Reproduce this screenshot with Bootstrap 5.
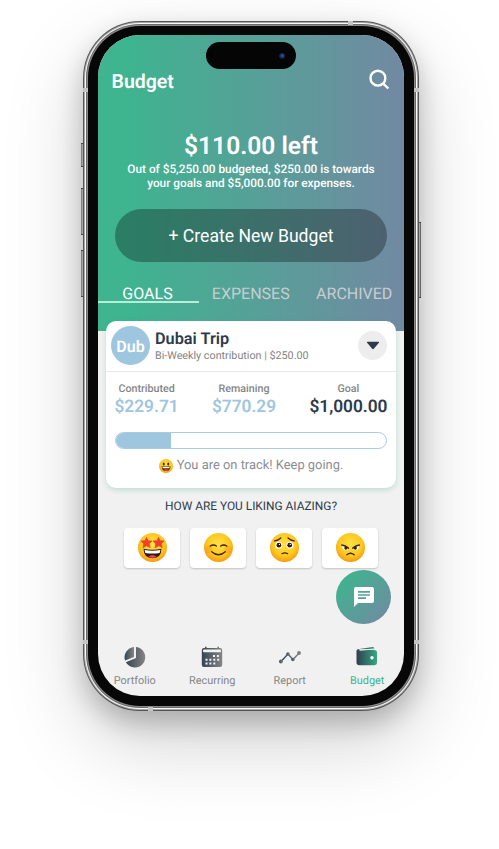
<!DOCTYPE html>
<html lang="en">
<head>
<meta charset="utf-8">
<meta name="viewport" content="width=device-width, initial-scale=1">
<title>Budget</title>
<link href="https://cdn.jsdelivr.net/npm/bootstrap@5.3.0/dist/css/bootstrap.min.css" rel="stylesheet">
<style>
body{font-family:Roboto,"Liberation Sans",sans-serif;background:#fff;width:499px;height:849px;overflow:hidden;color:#2d3a4a;text-rendering:geometricPrecision}
.stage{padding:21px 0 0 83px;height:849px}
.phone{width:336px;height:690px;border-radius:57px;padding:1px;background:#555;
 box-shadow:0 12px 26px rgba(0,0,0,.22),0 32px 80px rgba(0,0,0,.18)}
.rim-a{height:100%;border-radius:56px;padding:1px;background:#a8a8a8}
.rim-b{height:100%;border-radius:55px;padding:1px;background:#fafafa}
.rim-c{height:100%;border-radius:54px;padding:1px;background:#6b6b6b}
.rim-d{height:100%;border-radius:53px;padding:1px;background:#8d8989}
.bezel{height:100%;border-radius:52px;padding:8.500px 10px 10px;background:#070707}
.screen{width:306px;height:661px;border-radius:42px;background:#f1f1f1;overflow:hidden}
.side-key{position:absolute;width:3px;background:linear-gradient(90deg,#888,#ccc 50%,#555);border-top:1px solid #555;border-bottom:1px solid #555}
.antenna{position:absolute;background:#c3c3c3}
.island{position:absolute;left:108px;top:7px;width:90px;height:27px;border-radius:14px;background:#050505}
.lens{position:absolute;left:73px;top:11px;width:6px;height:6px;border-radius:50%;background:radial-gradient(circle at 55% 45%,#2b4f9a 0 15%,#12234e 50%,#0c0f18)}
.hero{height:296px;background:linear-gradient(90deg,#3eb48f 0%,#3eb48f 9%,#708ba1 96%);color:#fff}
.hero-head{padding:34px 14px 0 13.500px;height:60px}
.screen-title{font-size:19.500px;font-weight:600;line-height:26px}
.left-sum{font-size:24.600px;font-weight:600;line-height:32px;margin-top:36px}
.left-note{font-size:11.800px;font-weight:500;line-height:14px;margin-top:-1px}
.create{width:272px;height:53px;border-radius:27px;margin:19px 0 0 17px;background:rgba(0,0,0,.3);color:#fff;font-size:17.600px;padding:3px 0 0;border:0}
.tabs-row{margin-top:21px;height:20px}
.tab-i{width:103.500px;font-size:16px;line-height:22px;color:#c8cdd0;border-bottom:2px solid transparent;text-align:center;height:20.500px;flex:none;white-space:nowrap}
.tab-i.on{width:101px;color:#fff;border-color:#b6efd9;padding-right:2px}
.goal{margin:-10px 8px 0;height:167px;border-radius:10px;background:#fff;position:relative;box-shadow:0 2px 5px rgba(62,180,143,.3)}
.goal-top{height:51px;padding:0 9px 0 5px;border-bottom:1px solid #e9e9e9}
.ava{width:39px;height:39px;border-radius:50%;background:#9fc6df;color:#fff;font-weight:600;font-size:16px;line-height:41px;text-align:center}
.g-text{margin-left:5px}
.g-name{font-size:16.300px;font-weight:600;line-height:19px}
.g-sub{font-size:10.750px;color:#838383;line-height:14px;margin-top:1px}
.drop{width:29px;height:29px;border-radius:50%;background:#ededed}
.stat-l{font-size:10.700px;font-weight:500;color:#858585;line-height:14px}
.stat-v{font-size:17.300px;font-weight:600;line-height:22px;color:#9fc6df}
.text-ink{color:#2d3a4a}
.stats{padding:10px 8.500px 0 8.500px}
.meter{margin:14px 9px 0;height:17px;border-radius:9px;border:1px solid #a8cde2;overflow:hidden}
.meter-fill{height:100%;background:#9fc6df}
.track{font-size:12.900px;color:#8a8d93;line-height:18px;margin-top:8px}
.ask{font-size:11.900px;line-height:16px;margin-top:10px}
.moods{padding:14px 26px 0}
.mood{width:56px;height:40px;border-radius:4px;background:#fff;box-shadow:0 1px 2px rgba(0,0,0,.2)}
.chat-wrap{padding:2px 13px 0 0}
.chat{width:55px;height:54px;border-radius:50%;background:linear-gradient(135deg,#3eb48f 12%,#708ba1 92%);position:relative}
.nav-b{margin:21px 0 0 -2px}
.nav-i{width:77.500px;flex:none;font-size:10.900px;color:#858585;line-height:14px;text-align:center}
.nav-i.nav-on{color:#3eb48f}
.nav-i svg{display:block;margin:0 auto 5px}
svg{display:block;flex:none}
</style>
<script src="https://cdn.jsdelivr.net/npm/bootstrap@5.3.0/dist/js/bootstrap.bundle.min.js"></script>
</head>
<body>
<svg width="0" height="0" class="position-absolute">
<defs>
<radialGradient id="face" cx=".5" cy=".4" r=".6"><stop offset="0" stop-color="#ffe04a"/><stop offset=".65" stop-color="#fdc91f"/><stop offset="1" stop-color="#f49a14"/></radialGradient>
<linearGradient id="ink"><stop offset="0" stop-color="#354454"/><stop offset="1" stop-color="#858585"/></linearGradient>
<linearGradient id="wal"><stop offset="0" stop-color="#2f3e4e"/><stop offset="1" stop-color="#36a983"/></linearGradient>
</defs>
</svg>
<main class="stage position-relative">
<i class="side-key" style="left:81px;top:143px;height:24px"></i>
<i class="side-key" style="left:81px;top:188px;height:47px"></i>
<i class="side-key" style="left:81px;top:250px;height:47px"></i>
<i class="side-key" style="left:418px;top:222px;height:76px"></i>
<div class="phone position-relative"><div class="rim-a"><div class="rim-b"><div class="rim-c"><div class="rim-d"><div class="bezel">
<div class="screen position-relative">
  <div class="island"><i class="lens"></i></div>
  <section class="hero">
    <header class="hero-head d-flex justify-content-between">
      <h1 class="screen-title mb-0">Budget</h1>
      <svg width="22" height="22" viewBox="0 0 22 22" fill="none" stroke="#fff" stroke-width="2.4"><circle cx="9.900" cy="9.200" r="7.400"/><path d="M15.200 14.600 20.300 19.500"/></svg>
    </header>
    <div class="text-center">
      <div class="left-sum">$110.00 left</div>
      <p class="left-note mb-0">Out of $5,250.00 budgeted, $250.00 is towards<br>your goals and $5,000.00 for expenses.</p>
    </div>
    <button class="create btn d-block">+ Create New Budget</button>
    <nav class="tabs-row d-flex">
      <span class="tab-i on">GOALS</span><span class="tab-i">EXPENSES</span><span class="tab-i">ARCHIVED</span>
    </nav>
  </section>
  <section class="goal">
    <div class="goal-top d-flex align-items-center">
      <span class="ava">Dub</span>
      <div class="g-text flex-grow-1"><div class="g-name">Dubai Trip</div><div class="g-sub">Bi-Weekly contribution | $250.00</div></div>
      <span class="drop d-flex align-items-center justify-content-center"><svg width="14" height="9" viewBox="0 0 14 9"><path d="M1.5.8h11q1 .2.4 1L7.8 7.8q-.8.8-1.6 0L1.1 1.8q-.6-.8.4-1Z" fill="#2d3a4a"/></svg></span>
    </div>
    <div class="stats d-flex justify-content-between text-center">
      <div><div class="stat-l">Contributed</div><div class="stat-v">$229.71</div></div>
      <div><div class="stat-l">Remaining</div><div class="stat-v">$770.29</div></div>
      <div><div class="stat-l">Goal</div><div class="stat-v text-ink">$1,000.00</div></div>
    </div>
    <div class="meter"><div class="meter-fill" style="width:20.5%"></div></div>
    <div class="track d-flex align-items-center justify-content-center gap-1">
      <svg width="14" height="14" viewBox="0 0 28 28"><circle cx="14" cy="14" r="14" fill="url(#face)"/><ellipse cx="9.5" cy="10" rx="2" ry="3" fill="#40260c"/><ellipse cx="18.5" cy="10" rx="2" ry="3" fill="#40260c"/><path d="M5 15h18q-1 9-9 9t-9-9Z" fill="#40260c"/><path d="M7 16h14v2.5H7Z" fill="#fff"/><path d="M9 22q5-4 10 0-5 3.5-10 0Z" fill="#e34343"/></svg>
      <span>You are on track! Keep going.</span>
    </div>
  </section>
  <div class="ask text-center">HOW ARE YOU LIKING AIAZING?</div>
  <div class="moods d-flex justify-content-between">
    <span class="mood d-flex align-items-center justify-content-center"><svg width="29" height="29" viewBox="0 0 28 28"><circle cx="14" cy="14" r="14" fill="url(#face)"/><path id="st" d="m8.2 4.3 1.6 3.2 3.7.2-2.7 2.6 1 3.7-3.5-1.7-3.5 2 .8-3.9-2.8-2.6 3.9-.4Z" fill="#f0402c" stroke="#f0402c" stroke-width=".7" stroke-linejoin="round"/><use href="#st" x="11.6"/><path d="M5.300 15.300q8.700 1.800 17.400 0-.2 9-8.700 9t-8.700-9Z" fill="#321b12"/><path d="M6.400 16.400q7.600 1.500 15.200 0l-.7 3q-6.900 1-13.800 0Z" fill="#fff"/><path d="M10 22.800q4-3.200 8 0-4 2.600-8 0Z" fill="#ef3b5d"/></svg></span>
    <span class="mood d-flex align-items-center justify-content-center"><svg width="29" height="29" viewBox="0 0 28 28"><circle cx="14" cy="14" r="14" fill="url(#face)"/><circle cx="4.5" cy="16" r="3.6" fill="#ff8b22" opacity=".4"/><circle cx="23.5" cy="16" r="3.6" fill="#ff8b22" opacity=".4"/><path d="M6 12.600q3-2 6 0M16 12.600q3-2 6 0M7.500 18q6.500 6 13 0" fill="none" stroke="#40260c" stroke-width="1.300" stroke-linecap="round"/></svg></span>
    <span class="mood d-flex align-items-center justify-content-center"><svg width="29" height="29" viewBox="0 0 28 28"><circle cx="14" cy="14" r="14" fill="url(#face)"/><circle cx="8.4" cy="11.8" r="3.4" fill="#fff"/><circle cx="19.2" cy="11.8" r="3.4" fill="#fff"/><circle cx="8.6" cy="11.8" r="2.3" fill="#321b12"/><circle cx="19" cy="11.8" r="2.3" fill="#321b12"/><circle cx="9.1" cy="11" r=".6" fill="#fff"/><circle cx="19.6" cy="11" r=".6" fill="#fff"/><path d="M4.400 7.600Q8 7.200 10.400 4.800M17.400 4.800q2.400 2.400 6 2.800M11.500 20q2.800-1.800 5.600 0" fill="none" stroke="#40260c" stroke-width="1.200" stroke-linecap="round"/></svg></span>
    <span class="mood d-flex align-items-center justify-content-center"><svg width="29" height="29" viewBox="0 0 28 28"><circle cx="14" cy="14" r="14" fill="url(#face)"/><path d="M5.800 12 12 14.800q-.8 2-3 1.800-3-.4-3.200-4.600ZM22.400 12l-6.200 2.800q.8 2 3 1.800 3-.4 3.200-4.600Z" fill="#fff"/><circle cx="9.5" cy="14.600" r="1.500" fill="#321b12"/><circle cx="18.700" cy="14.600" r="1.500" fill="#321b12"/><path d="M5.600 11.600q3.400.3 6.400 3M22.600 11.600q-3.400.3-6.400 3M10.500 21q3.500-2.800 7 0" fill="none" stroke="#40260c" stroke-width="1.400" stroke-linecap="round"/></svg></span>
  </div>
  <div class="chat-wrap d-flex justify-content-end">
    <span class="chat d-flex align-items-center justify-content-center"><svg width="20" height="20" viewBox="0 0 20 20"><path d="M2 0h16q2 0 2 2v12q0 2-2 2H4l-4 4V2Q0 0 2 0Z" fill="#fff"/><path d="M4 4.800h12M4 8h12M4 11.100h8" stroke="#55a09a" stroke-width="1.700"/></svg></span>
  </div>
  <nav class="nav-b d-flex">
    <span class="nav-i"><svg width="22" height="24" viewBox="0 0 22 24"><g fill="url(#ink)"><path d="M10 2v10L1.100 15.600A10.300 10.300 0 0 1 10 2Z"/><path d="M12 2a10.300 10.300 0 1 1-10.100 15.200L12 13Z"/></g></svg>Portfolio</span>
    <span class="nav-i"><svg width="22" height="24" viewBox="0 0 22 24"><path d="M3 3h1V1.800h1.600V3h10.800V1.800H18V3h1q2.200 0 2.200 2.200v14.600q0 2.200-2.200 2.200H3Q.8 22 .8 19.800V5.200Q.8 3 3 3Z" fill="url(#ink)"/><rect x="2" y="4.500" width="18" height="2.700" rx="1" fill="#f1f1f1"/><path d="M12 11h6.200M4.500 14.700h13.700M4.500 18.400h10" stroke="#f1f1f1" stroke-width="2" stroke-dasharray="2 1.900"/></svg>Recurring</span>
    <span class="nav-i"><svg width="22" height="24" viewBox="0 0 22 24"><path d="m2 16.500 7-7.500 5 5.500 6.200-6.500" fill="none" stroke="url(#ink)" stroke-width="1.500"/><g fill="url(#ink)"><circle cx="2" cy="16.500" r="1.900"/><circle cx="9" cy="9" r="1.800"/><circle cx="14" cy="14.500" r="1.800"/></g><circle cx="20" cy="8" r="1.900" fill="#7d7d7d"/></svg>Report</span>
    <span class="nav-i nav-on"><svg width="22" height="24" viewBox="0 0 22 24"><path d="M2 4.300 16.500 2q1.500-.2 1.700 1.300v1H4q-1 .2-1 .8h15q3 0 3 2.600v9.800q0 2.800-3 2.800H3.500Q.5 20.300.5 17.500V6Q.5 4.600 2 4.300Z" fill="url(#wal)"/><path d="M3.500 5.300 18 4" stroke="#f1f1f1" stroke-width="1"/><circle cx="16" cy="12.800" r="1.700" fill="#f4fff8"/></svg>Budget</span>
  </nav>
</div>
</div></div></div></div></div></div>
<i class="antenna" style="left:83px;top:88px;width:5px;height:4px"></i>
<i class="antenna" style="left:414px;top:88px;width:5px;height:4px"></i>
<i class="antenna" style="left:83px;top:640px;width:5px;height:4px"></i>
<i class="antenna" style="left:414px;top:640px;width:5px;height:4px"></i>
<i class="antenna" style="left:348px;top:21px;width:5px;height:4px"></i>
<i class="antenna" style="left:148px;top:707px;width:5px;height:4px"></i>
</main>
</body>
</html>
